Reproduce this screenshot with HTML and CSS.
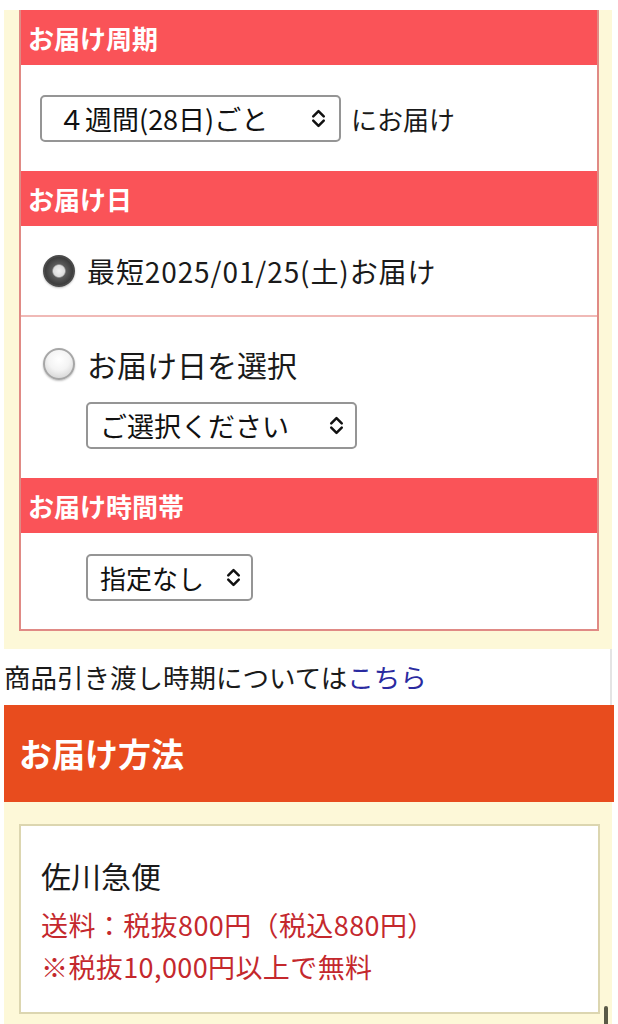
FILE: index.html
```html
<!DOCTYPE html>
<html lang="ja">
<head>
<meta charset="utf-8">
<title>お届け設定</title>
<link rel="stylesheet" href="styles.css">
</head>
<body>
<div class="page">
  <div class="panel">
    <div class="panel-head">お届け周期</div>
    <div class="panel-body cycle">
      <div class="select sel-cycle"><span>４週間(28日)ごと</span><svg class="chev" viewBox="0 0 16 20" width="17" height="21"><path d="M3 8 L8 3 L13 8 M3 12 L8 17 L13 12" fill="none" stroke="#111" stroke-width="2.4" stroke-linecap="round" stroke-linejoin="round"/></svg></div>
      <span class="after">にお届け</span>
    </div>
    <div class="panel-head">お届け日</div>
    <div class="row row1">
      <span class="radio on"></span><span class="label">最短2025/01/25(土)お届け</span>
    </div>
    <div class="row row2">
      <div class="radio-line"><span class="radio"></span><span class="label big">お届け日を選択</span></div>
      <div class="select sel-date"><span>ご選択ください</span><svg class="chev" viewBox="0 0 16 20" width="17" height="21"><path d="M3 8 L8 3 L13 8 M3 12 L8 17 L13 12" fill="none" stroke="#111" stroke-width="2.4" stroke-linecap="round" stroke-linejoin="round"/></svg></div>
    </div>
    <div class="panel-head">お届け時間帯</div>
    <div class="panel-body time">
      <div class="select sel-time"><span>指定なし</span><svg class="chev" viewBox="0 0 16 20" width="17" height="21"><path d="M3 8 L8 3 L13 8 M3 12 L8 17 L13 12" fill="none" stroke="#111" stroke-width="2.4" stroke-linecap="round" stroke-linejoin="round"/></svg></div>
    </div>
  </div>
  <div class="note">商品引き渡し時期については<a class="link" href="#">こちら</a></div>
  <div class="method-head">お届け方法</div>
  <div class="method-box">
    <div class="carrier">佐川急便</div>
    <div class="fee">送料：税抜800円（税込880円）</div>
    <div class="fee">※税抜10,000円以上で無料</div>
  </div>
  <span class="scroll-ind"></span>
</div>
</body>
</html>
```
FILE: styles.css
```css
html, body {
  margin: 0;
  padding: 0;
  background: #ffffff;
}
body {
  padding-top: 10px;
  font-family: "Noto Sans CJK JP", "Noto Sans", sans-serif;
  color: #1a1a1a;
  overflow: hidden;
  height: 1014px;
}
.page {
  position: relative;
  margin: 0 6px 0 4px;
  background: #fdf8d8;
  padding-bottom: 20px;
}
.panel {
  margin: 0 13px 0 15px;
  border: 2px solid #e08a85;
  border-top: none;
  background: #ffffff;
}
.panel-head {
  background: #fa5358;
  color: #ffffff;
  font-weight: bold;
  font-size: 26px;
  height: 55px;
  line-height: 55px;
  padding-left: 7px;
}
.panel-body {
  display: flex;
  align-items: center;
}
.cycle {
  height: 106px;
  padding-left: 19px;
  gap: 10px;
}
.select {
  display: flex;
  align-items: center;
  justify-content: space-between;
  box-sizing: border-box;
  height: 47px;
  border: 2px solid #959595;
  border-radius: 5px;
  background: #ffffff;
  font-size: 27px;
  color: #111;
  padding: 0 12px 0 16px;
}
.sel-cycle { width: 301px; }
.sel-date { width: 271px; margin-left: 65px; padding-left: 12px; padding-right: 10px; }
.sel-time { width: 167px; padding-left: 12px; padding-right: 9px; }
.sel-time span { font-size: 26px; }
.after {
  font-size: 26px;
}
.chev { flex: none; }
.row {
  border-top: 2px solid #f0b9b6;
}
.panel-head + .row { border-top: none; }
.row1 {
  height: 89px;
  display: flex;
  align-items: center;
  padding-left: 22px;
}
.row2 {
  padding: 24px 0 29px 0;
}
.radio-line {
  display: flex;
  align-items: center;
  padding-left: 22px;
  height: 46px;
  margin-bottom: 15px;
}
.radio {
  flex: none;
  box-sizing: border-box;
  width: 32px;
  height: 32px;
  border-radius: 50%;
  margin-right: 12px;
  background: radial-gradient(circle at 50% 35%, #ffffff 0%, #f4f4f4 45%, #c9c9c9 100%);
  border: 2px solid #a6a6a6;
  box-shadow: 0 1px 2px rgba(0,0,0,0.25);
}
.radio.on {
  background: radial-gradient(circle at 50% 50%, #f2f2f2 0%, #dcdcdc 28%, #5a5a5a 36%, #3c3c3c 70%, #6a6a6a 100%);
  border: 2px solid #4a4a4a;
}
.label {
  font-size: 28px;
  letter-spacing: 0.9px;
}
.label.big {
  font-size: 30px;
  letter-spacing: 0;
}
.time {
  height: 96px;
  padding-left: 65px;
  padding-bottom: 2px;
  box-sizing: border-box;
  align-items: flex-start;
  padding-top: 21px;
}
.note {
  margin-top: 18px;
  background: #ffffff;
  height: 56px;
  line-height: 56px;
  font-size: 26.5px;
  color: #1a1a1a;
  border-right: 2px solid #e4e4e4;
}
.link {
  color: #2a2aa0;
  text-decoration: none;
}
.method-head {
  background: #e84c1e;
  color: #ffffff;
  font-weight: bold;
  font-size: 33px;
  height: 97px;
  line-height: 97px;
  padding-left: 15px;
  margin-right: -2px;
}
.method-box {
  margin: 22px 12px 0 15px;
  border: 2px solid #dcd6b0;
  background: #ffffff;
  height: 190px;
  box-sizing: border-box;
  padding: 28px 0 0 20px;
}
.carrier {
  font-size: 30px;
  line-height: 42px;
  margin-bottom: 8px;
}
.fee {
  font-size: 27px;
  line-height: 42px;
  color: #c4282d;
  letter-spacing: 0.4px;
}
.scroll-ind {
  position: absolute;
  right: 4px;
  top: 996px;
  width: 4px;
  height: 30px;
  background: #5a5a48;
  border-radius: 2px;
}
```
